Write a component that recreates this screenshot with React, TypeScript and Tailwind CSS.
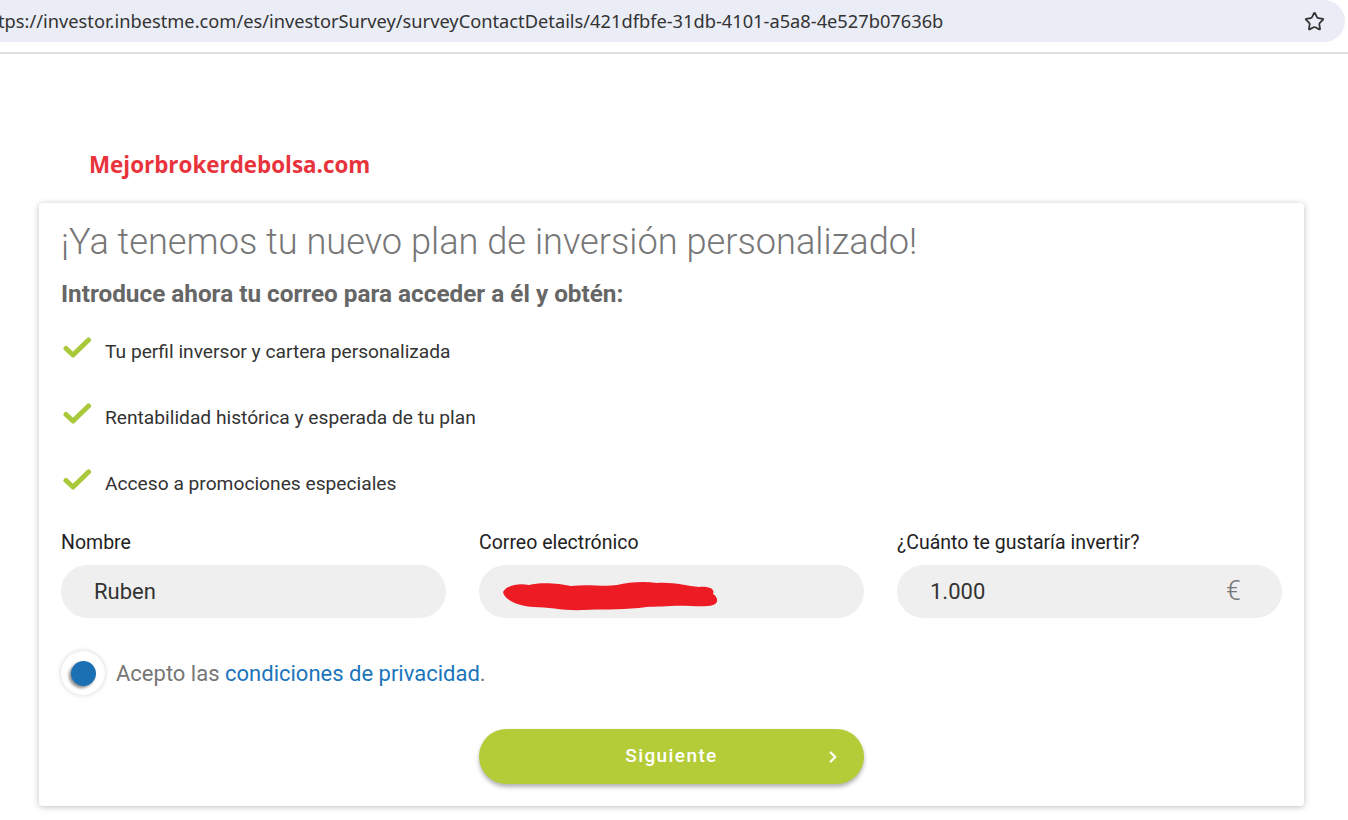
import { Star, ChevronRight } from 'lucide-react'

const perks = [
  'Tu perfil inversor y cartera personalizada',
  'Rentabilidad histórica y esperada de tu plan',
  'Acceso a promociones especiales',
]

function Check() {
  return (
    <svg width="28" height="22" viewBox="0 0 28 22" className="shrink-0">
      <path d="M3 11.5 L10 18 L25.5 3" fill="none" stroke="#a9c83a" strokeWidth="5" strokeLinecap="round" strokeLinejoin="round" />
    </svg>
  )
}

function Scribble() {
  return (
    <svg width="222" height="32" viewBox="0 0 222 32">
      <path
        d="M4 13 C8 6 20 4 30 6 C40 3 60 4 72 7 C90 5 105 8 118 6 C130 3 145 2 158 4 C175 3 188 7 200 8 C212 7 216 11 214 15 C219 18 220 24 214 26 C205 29 190 26 172 27 C160 28 150 27 140 29 C120 31 100 30 85 31 C65 32 50 28 35 28 C20 27 6 22 4 13 Z"
        fill="#ed1c24"
      />
    </svg>
  )
}

function Field({ label, children }: { label: string; children: React.ReactNode }) {
  return (
    <div className="flex flex-col">
      <label className="text-[19.5px] leading-[24px] text-[#222]">{label}</label>
      <div className="mt-[10px] h-[53px] rounded-full bg-[#efefef] flex items-center px-[33px] text-[22px] text-[#333]">
        {children}
      </div>
    </div>
  )
}

export default function App() {
  return (
    <div className="min-h-screen w-[1348px] bg-white font-['Roboto',sans-serif]">
      {/* Address bar */}
      <div className="h-[42px] w-[1345px] rounded-r-full bg-[#eaedf6] flex items-center">
        <span className="-ml-[2px] text-[18.25px] text-[#333] font-['Noto_Sans',sans-serif] whitespace-nowrap">
          tps://investor.inbestme.com/es/investorSurvey/surveyContactDetails/421dfbfe-31db-4101-a5a8-4e527b07636b
        </span>
        <Star className="ml-auto mr-[20px] text-[#333]" size={21} strokeWidth={2} />
      </div>
      <div className="mt-[10px] h-[2px] bg-[#e0e0e0]" />

      <div className="pt-[97px] pl-[89px]">
        <p className="text-[22.4px] leading-[28px] font-bold text-[#e8333d] font-['Open_Sans',sans-serif]">Mejorbrokerdebolsa.com</p>
      </div>

      {/* Card */}
      <div className="mt-[24px] ml-[39px] w-[1265px] rounded-[4px] bg-white shadow-[0_1px_6px_rgba(0,0,0,0.25)] pl-[22px] pr-[22px] pt-[19px] pb-[22px]">
        <h1 className="text-[36.2px] leading-[40px] font-light text-[#777]">¡Ya tenemos tu nuevo plan de inversión personalizado!</h1>
        <h2 className="mt-[18px] text-[24.3px] leading-[28px] font-bold text-[#666]">Introduce ahora tu correo para acceder a él y obtén:</h2>

        <ul className="mt-[33px] flex flex-col gap-[44px]">
          {perks.map((p) => (
            <li key={p} className="flex items-center h-[22px]">
              <span className="ml-[2px] -mt-[8px]"><Check /></span>
              <span className="ml-[14px] text-[19.2px] text-[#333]">{p}</span>
            </li>
          ))}
        </ul>

        <div className="mt-[36px] grid grid-cols-3 gap-[33px] w-[1221px]">
          <Field label="Nombre">Ruben</Field>
          <Field label="Correo electrónico">
            <span className="-ml-[13px] mt-[6px]"><Scribble /></span>
          </Field>
          <Field label="¿Cuánto te gustaría invertir?">
            <span>1.000</span>
            <span className="ml-auto mr-[8px] text-[27px] font-light text-[#777]">€</span>
          </Field>
        </div>

        <div className="mt-[33px] flex items-center">
          <div className="w-[44px] h-[44px] rounded-full bg-white shadow-[0_0_5px_rgba(0,0,0,0.18)] flex items-center justify-center">
            <div className="w-[25px] h-[25px] rounded-full bg-[#1b6fb3] shadow-[-2px_2px_3px_rgba(0,0,0,0.45)]" />
          </div>
          <p className="ml-[11px] text-[22px] text-[#777]">
            Acepto las <a className="text-[#1b75bb]">condiciones de privacidad</a>.
          </p>
        </div>

        <div className="mt-[34px] flex justify-center">
          <button className="relative w-[385px] h-[55px] rounded-full bg-[#b3cc38] shadow-[0_3px_4px_rgba(0,0,0,0.3)] text-white text-[19px] font-medium tracking-[1.4px]">
            Siguiente
            <ChevronRight className="absolute right-[22px] top-1/2 -translate-y-1/2" size={18} strokeWidth={3} />
          </button>
        </div>
      </div>
    </div>
  )
}
